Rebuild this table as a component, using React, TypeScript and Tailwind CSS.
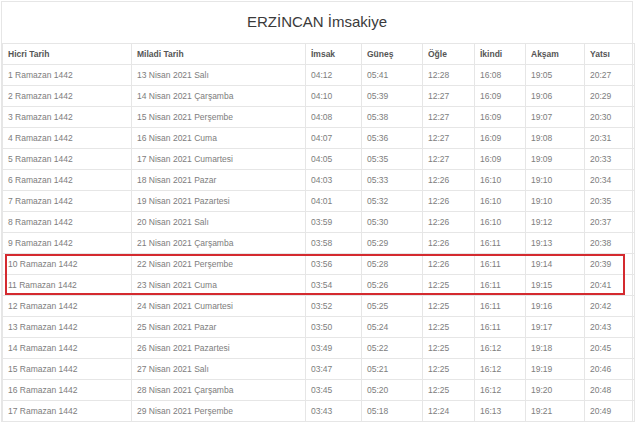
const HEADERS = ['Hicri Tarih', 'Miladi Tarih', 'İmsak', 'Güneş', 'Öğle', 'İkindi', 'Akşam', 'Yatsı']
const WIDTHS = ['w-[129px]', 'w-[174px]', 'w-[56px]', 'w-[61px]', 'w-[52px]', 'w-[51px]', 'w-[59px]', 'w-[50px]']

const ROWS: string[][] = [
  ['1 Ramazan 1442', '13 Nisan 2021 Salı', '04:12', '05:41', '12:28', '16:08', '19:05', '20:27'],
  ['2 Ramazan 1442', '14 Nisan 2021 Çarşamba', '04:10', '05:39', '12:27', '16:09', '19:06', '20:29'],
  ['3 Ramazan 1442', '15 Nisan 2021 Perşembe', '04:08', '05:38', '12:27', '16:09', '19:07', '20:30'],
  ['4 Ramazan 1442', '16 Nisan 2021 Cuma', '04:07', '05:36', '12:27', '16:09', '19:08', '20:31'],
  ['5 Ramazan 1442', '17 Nisan 2021 Cumartesi', '04:05', '05:35', '12:27', '16:09', '19:09', '20:33'],
  ['6 Ramazan 1442', '18 Nisan 2021 Pazar', '04:03', '05:33', '12:26', '16:10', '19:10', '20:34'],
  ['7 Ramazan 1442', '19 Nisan 2021 Pazartesi', '04:01', '05:32', '12:26', '16:10', '19:10', '20:35'],
  ['8 Ramazan 1442', '20 Nisan 2021 Salı', '03:59', '05:30', '12:26', '16:10', '19:12', '20:37'],
  ['9 Ramazan 1442', '21 Nisan 2021 Çarşamba', '03:58', '05:29', '12:26', '16:11', '19:13', '20:38'],
  ['10 Ramazan 1442', '22 Nisan 2021 Perşembe', '03:56', '05:28', '12:26', '16:11', '19:14', '20:39'],
  ['11 Ramazan 1442', '23 Nisan 2021 Cuma', '03:54', '05:26', '12:25', '16:11', '19:15', '20:41'],
  ['12 Ramazan 1442', '24 Nisan 2021 Cumartesi', '03:52', '05:25', '12:25', '16:11', '19:16', '20:42'],
  ['13 Ramazan 1442', '25 Nisan 2021 Pazar', '03:50', '05:24', '12:25', '16:11', '19:17', '20:43'],
  ['14 Ramazan 1442', '26 Nisan 2021 Pazartesi', '03:49', '05:22', '12:25', '16:12', '19:18', '20:45'],
  ['15 Ramazan 1442', '27 Nisan 2021 Salı', '03:47', '05:21', '12:25', '16:12', '19:19', '20:46'],
  ['16 Ramazan 1442', '28 Nisan 2021 Çarşamba', '03:45', '05:20', '12:25', '16:12', '19:20', '20:48'],
  ['17 Ramazan 1442', '29 Nisan 2021 Perşembe', '03:43', '05:18', '12:24', '16:13', '19:21', '20:49'],
]

export default function App() {
  return (
    <div className="h-[422px] w-[640px] overflow-hidden bg-white pl-[1px] pt-[1px] font-['Liberation_Sans',Arial,sans-serif]">
      <div className="relative w-[632px] border border-[#e6e6e6]">
        <div className="flex h-[41px] items-center justify-center text-[15px] text-[#3a3a3a]">
          ERZİNCAN İmsakiye
        </div>
        <table className="w-full table-fixed border-collapse text-[8.5px]">
          <thead>
            <tr className="h-[21px]">
              {HEADERS.map((h, i) => (
                <th
                  key={h}
                  className={`${WIDTHS[i]} border border-[#e6e6e6] px-[5px] text-left font-bold text-[#555]`}
                >
                  {h}
                </th>
              ))}
            </tr>
          </thead>
          <tbody>
            {ROWS.map((r) => (
              <tr key={r[0]} className="h-[21px]">
                {r.map((c, i) => (
                  <td key={i} className="border border-[#e6e6e6] px-[5px] text-[#7d7d7d]">
                    {c}
                  </td>
                ))}
              </tr>
            ))}
          </tbody>
        </table>
        {/* highlight around 10–11 Ramazan */}
        <div className="pointer-events-none absolute left-[3px] top-[252px] h-[41px] w-[620px] border-2 border-[#d42a2f]" />
      </div>
    </div>
  )
}
